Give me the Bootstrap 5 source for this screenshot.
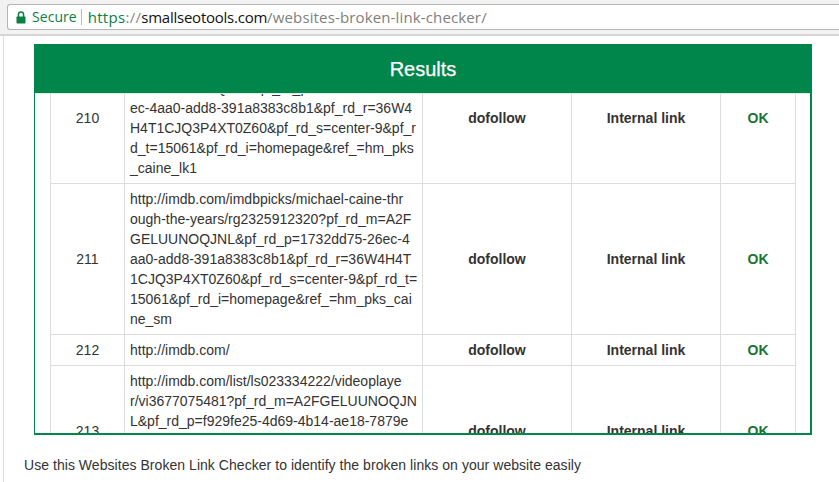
<!DOCTYPE html>
<html lang="en">
<head>
<meta charset="utf-8">
<title>Websites Broken Link Checker</title>
<link href="https://cdn.jsdelivr.net/npm/bootstrap@5.3.0/dist/css/bootstrap.min.css" rel="stylesheet">
<style>
html,body{height:482px;overflow:hidden;background:#fff;}
body{font-family:"Liberation Sans",Arial,sans-serif;font-size:14px;line-height:20px;color:#333;}
.chrome-bar{height:36px;background:#f2f2f2;border-bottom:2px solid #d6d6d6;padding:4px 0 0 7px;}
.addr-box{height:26px;background:#fff;border:1px solid #b4b4b4;border-right:0;border-radius:3px 0 0 3px;padding-left:8px;font-family:"Open Sans",sans-serif;font-size:15px;line-height:24px;white-space:nowrap;}
.addr-lock{margin-right:6px;}
.addr-secure{color:#0b8043;font-size:14px;letter-spacing:.05px;}
.addr-sep{width:1px;height:16px;background:#b9b9b9;margin:0 6px 0 4px;}
.addr-scheme{color:#0b8043;letter-spacing:.3px;}
.addr-slash{color:#8a8a8a;letter-spacing:.3px;}
.addr-host{color:#111;letter-spacing:-.24px;}
.addr-path{color:#808080;letter-spacing:.14px;}
.page-frame{height:446px;margin-left:3px;border-left:1px solid #dedede;padding:8px 27px 0 30px;}
.result-panel{border:solid #00854a;border-width:0 2px 2px 1px;height:391px;overflow:hidden;display:flex;flex-direction:column;}
.result-head{height:50px;flex:none;background:#00854a;color:#fff;font-size:20px;line-height:50px;text-align:center;border-bottom:1px solid #d9efdd;margin:0 -2px 0 -1px;-webkit-text-stroke:.25px #fff;}
.scroll-pane{flex:1;overflow:hidden;padding:0 15px;}
.link-table{width:745px;table-layout:fixed;margin:-42px 0 0;border-color:#ddd;color:#333;--bs-table-color:#333;}
.link-table td{padding:5px;vertical-align:middle;text-align:center;line-height:20px;border-color:#ddd;}
.link-table td.url-cell{text-align:left;white-space:nowrap;}
.link-table td.flag-cell{font-weight:700;}
.link-table td.ok-cell{font-weight:700;color:#1a7431;}
.foot-note{margin:20px 0 0 -10px;letter-spacing:.045px;}
</style>
</head>
<body>
<div class="chrome-bar">
  <div class="addr-box d-flex align-items-center">
    <svg width="10" height="13" viewBox="0 0 10 13" class="addr-lock flex-shrink-0" aria-hidden="true"><path d="M2.4 6V3.7a2.6 2.6 0 0 1 5.2 0V6" fill="none" stroke="#0b8043" stroke-width="1.5"/><rect x=".5" y="5.5" width="9" height="7" rx=".7" fill="#0b8043"/></svg>
    <span class="addr-secure">Secure</span><span class="addr-sep"></span><span><span class="addr-scheme">https</span><span class="addr-slash">://</span><span class="addr-host">smallseotools.com</span><span class="addr-path">/websites-broken-link-checker/</span></span>
  </div>
</div>
<div class="page-frame">
  <div class="result-panel">
    <div class="result-head">Results</div>
    <div class="scroll-pane">
      <table class="table table-bordered link-table">
        <colgroup><col style="width:74px"><col style="width:298px"><col style="width:149px"><col style="width:149px"><col style="width:75px"></colgroup>
        <tbody>
          <tr><td>210</td><td class="url-cell">http://imdb.com/name/nm0000323/?pf_rd_m=A<br>2FGELUUNOQJNL&amp;pf_rd_p=1732dd75-26<br>ec-4aa0-add8-391a8383c8b1&amp;pf_rd_r=36W4<br>H4T1CJQ3P4XT0Z60&amp;pf_rd_s=center-9&amp;pf_r<br>d_t=15061&amp;pf_rd_i=homepage&amp;ref_=hm_pks<br>_caine_lk1</td><td class="flag-cell">dofollow</td><td class="flag-cell">Internal link</td><td class="ok-cell">OK</td></tr>
          <tr><td>211</td><td class="url-cell">http://imdb.com/imdbpicks/michael-caine-thr<br>ough-the-years/rg2325912320?pf_rd_m=A2F<br>GELUUNOQJNL&amp;pf_rd_p=1732dd75-26ec-4<br>aa0-add8-391a8383c8b1&amp;pf_rd_r=36W4H4T<br>1CJQ3P4XT0Z60&amp;pf_rd_s=center-9&amp;pf_rd_t=<br>15061&amp;pf_rd_i=homepage&amp;ref_=hm_pks_cai<br>ne_sm</td><td class="flag-cell">dofollow</td><td class="flag-cell">Internal link</td><td class="ok-cell">OK</td></tr>
          <tr><td>212</td><td class="url-cell">http://imdb.com/</td><td class="flag-cell">dofollow</td><td class="flag-cell">Internal link</td><td class="ok-cell">OK</td></tr>
          <tr><td>213</td><td class="url-cell">http://imdb.com/list/ls023334222/videoplaye<br>r/vi3677075481?pf_rd_m=A2FGELUUNOQJN<br>L&amp;pf_rd_p=f929fe25-4d69-4b14-ae18-7879e<br>a1c8b1d&amp;pf_rd_r=36W4H4T1CJQ3P4XT0Z6<br>0&amp;pf_rd_s=center-9&amp;pf_rd_t=15061&amp;pf_rd_i<br>=homepage</td><td class="flag-cell">dofollow</td><td class="flag-cell">Internal link</td><td class="ok-cell">OK</td></tr>
        </tbody>
      </table>
    </div>
  </div>
  <p class="foot-note">Use this Websites Broken Link Checker to identify the broken links on your website easily</p>
</div>
</body>
</html>
